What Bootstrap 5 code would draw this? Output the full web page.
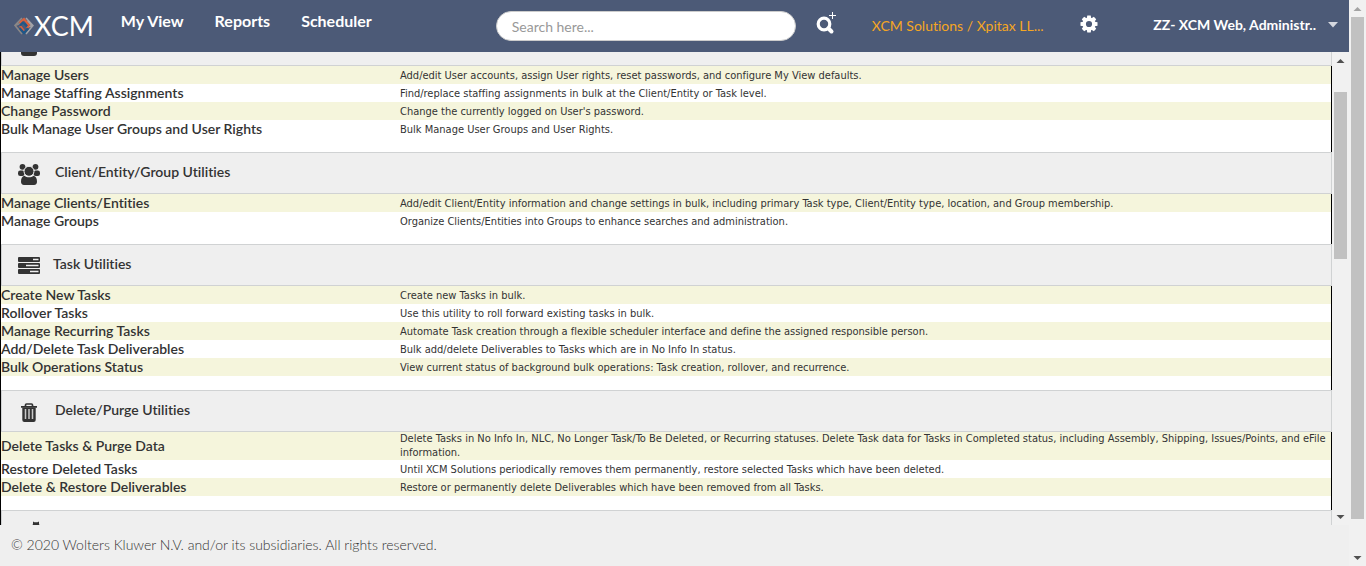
<!DOCTYPE html>
<html lang="en">
<head>
<meta charset="utf-8">
<meta name="viewport" content="width=device-width, initial-scale=1">
<title>XCM Administration</title>
<link href="https://cdn.jsdelivr.net/npm/bootstrap@5.3.0/dist/css/bootstrap.min.css" rel="stylesheet">
<style>
body { font-family: Lato, sans-serif; font-size: 14px; line-height: 18px; color: #333; background: #efefef; font-variant-ligatures: none; }
a { color: inherit; text-decoration: none; }
.app-column { min-width: 0; }
.topbar { height: 52px; background: #4c5a77; color: #fff; padding: 0 11px 0 14px; }
.brand-name { font-size: 27px; line-height: 28px; }
.main-menu { font-size: 16px; font-weight: 700; gap: 31px; margin-left: 27px; padding-bottom: 10px; }
.main-menu a { white-space: nowrap; }
.search-form { margin-left: 124px; gap: 19px; }
.search-box { width: 300px; height: 30px; border: 1px solid #ccc; border-radius: 15px; padding: 0 15px; font-size: 14px; color: #555; background: #fff; }
.search-box::placeholder { color: #999; opacity: 1; }
.icon-btn { border: 0; background: none; padding: 0; color: #fff; display: flex; }
.search-form .icon-btn { padding-bottom: 6px; }
.firm-link { color: #f5a623; font-size: 14px; margin-left: 35px; white-space: nowrap; }
.gear-btn { margin-left: 36px; padding-bottom: 4px; }
.user-btn { font-size: 14px; font-weight: 700; gap: 12px; padding-bottom: 2px; white-space: nowrap; }
.utilities { border-left: 1px solid #000; background: #fff; }
.first-section { margin-top: -28px; }
.section-head { height: 42px; background: #efefef; border: 1px solid #d0d2d3; font-size: 14px; line-height: 18px; font-weight: 600; margin: 0; padding: 0 16px 2px 15px; gap: 14px; color: #333; }
.section-head svg { width: 24px; height: 24px; margin-top: 4px; }
.task-head { gap: 12px; }
.util-table { width: 100%; table-layout: fixed; margin: 0; }
.util-table th { width: 30%; padding: 0; font-size: 14px; font-weight: 600; height: 18px; line-height: 18px; }
.util-table td { padding: 1px 0 0; font-family: "DejaVu Sans Condensed", "DejaVu Sans", sans-serif; font-size: 11px; line-height: 14px; }
.util-table .two-line { padding: 0; }
.util-table tr:nth-child(odd) { background: #f5f5dc; }
.util-wrap { padding-bottom: 14px; border-right: 1px solid #000; }
.scroll-track { width: 17px; background: #f1f1f1; }
.scroll-track svg { width: 17px; height: 17px; flex: none; }
.scroll-thumb { width: 13px; background: #c1c1c1; }
.page-foot { height: 41px; font-weight: 300; font-size: 14px; padding: 0 11px 2px; }
</style>
</head>
<body>
<svg width="0" height="0" class="position-absolute" aria-hidden="true">
  <symbol id="arrow-up" viewBox="0 0 17 17"><path d="M4.500 11h8L8.500 7z" fill="currentColor"/></symbol>
  <symbol id="arrow-down" viewBox="0 0 17 17"><path d="M4.500 7h8L8.500 11z" fill="currentColor"/></symbol>
</svg>
<div class="d-flex vh-100 overflow-hidden">
  <div class="app-column d-flex flex-column flex-grow-1">
    <header class="topbar d-flex align-items-center flex-shrink-0">
      <a href="#" class="d-flex align-items-center" aria-label="XCM">
        <svg width="20" height="20" viewBox="0 0 20 20" fill="none">
          <path d="M8 2L1 9.500 8 18M1 9.500L6 7.500M4 14l3-2" stroke="#8b8787" stroke-width="1.700"/>
          <path d="M12 2l7 7.500-7 8.500M12.500 5L18 9.500l-4 1.500" stroke="#a2a3a8" stroke-width="1.500"/>
          <path d="M5.500 7L10 3l5 6-2 3M6 10l4 5" stroke="#d9603c" stroke-width="2.200"/>
          <path d="M5.500 12l4.500 5 4-4.500M9.500 6L6 9.500M10 7l3 3.500" stroke="#1f5788" stroke-width="2.200"/>
        </svg>
        <span class="brand-name">XCM</span>
      </a>
      <nav class="main-menu d-flex">
        <a href="#">My View</a><a href="#">Reports</a><a href="#">Scheduler</a>
      </nav>
      <form class="search-form d-flex align-items-center" onsubmit="return false">
        <input type="text" class="search-box" placeholder="Search here..." aria-label="Search">
        <button class="icon-btn" type="button" aria-label="Advanced search">
          <svg width="22" height="24" viewBox="0 0 22 24" fill="none" stroke="#fff"><circle cx="9" cy="13" r="5.800" stroke-width="3.200"/><path d="M13.500 17.500l3 3" stroke-width="4" stroke-linecap="round"/><path d="M17.500 1v7M14 4.500h7" stroke-width="1"/></svg>
        </button>
      </form>
      <a href="#" class="firm-link">XCM Solutions / Xpitax LL...</a>
      <button class="icon-btn gear-btn" type="button" aria-label="Settings">
        <svg width="18" height="18" viewBox="0 0 18 18"><g fill="#fff"><path id="tooth" d="M7.300 .500h3.400l.8 4h-5zM7.300 17.500h3.400l.8-4h-5z"/><use href="#tooth" transform="rotate(45 9 9)"/><use href="#tooth" transform="rotate(90 9 9)"/><use href="#tooth" transform="rotate(135 9 9)"/></g><circle cx="9" cy="9" r="4.800" fill="none" stroke="#fff" stroke-width="3.400"/></svg>
      </button>
      <button class="icon-btn user-btn align-items-center ms-auto" type="button">ZZ- XCM Web, Administr..
        <svg width="10" height="6" viewBox="0 0 10 6"><path d="M0 0h10L5 5.500z" fill="#d5d8df"/></svg>
      </button>
    </header>
    <div class="d-flex flex-grow-1 overflow-hidden">
      <main class="utilities flex-grow-1 overflow-hidden">
        <section class="first-section">
          <h2 class="section-head d-flex align-items-center"><svg viewBox="0 0 24 24" fill="#333"><circle cx="12" cy="7" r="5"/><rect x="4" y="12" width="16" height="10" rx="3"/></svg></h2>
          <div class="util-wrap"><table class="util-table">
            <tr><th scope="row"><a href="#">Manage Users</a></th><td>Add/edit User accounts, assign User rights, reset passwords, and configure My View defaults.</td></tr>
            <tr><th scope="row"><a href="#">Manage Staffing Assignments</a></th><td>Find/replace staffing assignments in bulk at the Client/Entity or Task level.</td></tr>
            <tr><th scope="row"><a href="#">Change Password</a></th><td>Change the currently logged on User's password.</td></tr>
            <tr><th scope="row"><a href="#">Bulk Manage User Groups and User Rights</a></th><td>Bulk Manage User Groups and User Rights.</td></tr>
          </table></div>
        </section>
        <section>
          <h2 class="section-head d-flex align-items-center"><svg viewBox="0 0 24 24" fill="#333"><g transform="translate(0 1)"><circle cx="5.500" cy="3.800" r="2.900"/><circle cx="18.500" cy="3.800" r="2.900"/><rect x="1" y="7.500" width="6.500" height="5.500" rx="2.200"/><rect x="16.500" y="7.500" width="6.500" height="5.500" rx="2.200"/><circle cx="12" cy="8.300" r="5" stroke="#efefef" stroke-width="1"/><path d="M7.500 12.800c2.500 2 6.500 2 9 0 2.500.5 3.500 3 3.500 6 0 2-1 3.200-3 3.200H7c-2 0-3-1.200-3-3.200 0-3 1-5.500 3.500-6z"/></g></svg>Client/Entity/Group Utilities</h2>
          <div class="util-wrap"><table class="util-table">
            <tr><th scope="row"><a href="#">Manage Clients/Entities</a></th><td>Add/edit Client/Entity information and change settings in bulk, including primary Task type, Client/Entity type, location, and Group membership.</td></tr>
            <tr><th scope="row"><a href="#">Manage Groups</a></th><td>Organize Clients/Entities into Groups to enhance searches and administration.</td></tr>
          </table></div>
        </section>
        <section>
          <h2 class="section-head task-head d-flex align-items-center"><svg viewBox="0 0 24 24"><g fill="#333"><rect x="1" y="3" width="22" height="5" rx="1"/><rect x="1" y="9" width="22" height="5" rx="1"/><rect x="1" y="15" width="22" height="5" rx="1"/></g><path d="M16 4.800h5.500v1.500H16zM9 10.800h12.500v1.500H9zM13 16.800h8.500v1.500H13z" fill="#efefef"/></svg>Task Utilities</h2>
          <div class="util-wrap"><table class="util-table">
            <tr><th scope="row"><a href="#">Create New Tasks</a></th><td>Create new Tasks in bulk.</td></tr>
            <tr><th scope="row"><a href="#">Rollover Tasks</a></th><td>Use this utility to roll forward existing tasks in bulk.</td></tr>
            <tr><th scope="row"><a href="#">Manage Recurring Tasks</a></th><td>Automate Task creation through a flexible scheduler interface and define the assigned responsible person.</td></tr>
            <tr><th scope="row"><a href="#">Add/Delete Task Deliverables</a></th><td>Bulk add/delete Deliverables to Tasks which are in No Info In status.</td></tr>
            <tr><th scope="row"><a href="#">Bulk Operations Status</a></th><td>View current status of background bulk operations: Task creation, rollover, and recurrence.</td></tr>
          </table></div>
        </section>
        <section>
          <h2 class="section-head d-flex align-items-center"><svg viewBox="0 0 24 24"><g transform="translate(0 1)"><path d="M8.500 5.500V4q0-1 1-1h5q1 0 1 1v1.500M4 5.800h16" stroke="#333" stroke-width="1.700" fill="none"/><path d="M5.300 6.500h13.400v12.500q0 2-2 2H7.300q-2 0-2-2z" fill="#333"/><path d="M8.500 8v10M12 8v10M15.500 8v10" stroke="#c9c9c9" stroke-width="1.500"/></g></svg>Delete/Purge Utilities</h2>
          <div class="util-wrap"><table class="util-table">
            <tr><th scope="row"><a href="#">Delete Tasks &amp; Purge Data</a></th><td class="two-line">Delete Tasks in No Info In, NLC, No Longer Task/To Be Deleted, or Recurring statuses. Delete Task data for Tasks in Completed status, including Assembly, Shipping, Issues/Points, and eFile information.</td></tr>
            <tr><th scope="row"><a href="#">Restore Deleted Tasks</a></th><td>Until XCM Solutions periodically removes them permanently, restore selected Tasks which have been deleted.</td></tr>
            <tr><th scope="row"><a href="#">Delete &amp; Restore Deliverables</a></th><td>Restore or permanently delete Deliverables which have been removed from all Tasks.</td></tr>
          </table></div>
        </section>
        <section>
          <h2 class="section-head d-flex align-items-center"><svg viewBox="0 0 24 24" fill="#333"><path d="M16 1.500l1.500.8h3l1.500-.8v2l1 4-1 4h-6l-1-4 1-4zM2 9h10v12H2z"/></svg></h2>
        </section>
      </main>
      <div class="scroll-track d-flex flex-column align-items-center flex-shrink-0" aria-hidden="true">
        <svg color="#505050"><use href="#arrow-up"/></svg>
        <div class="flex-grow-1"><div style="height:5.3%"></div><div class="scroll-thumb" style="height:38%"></div></div>
        <svg color="#505050"><use href="#arrow-down"/></svg>
      </div>
    </div>
    <footer class="page-foot d-flex align-items-center flex-shrink-0">© 2020 Wolters Kluwer N.V. and/or its subsidiaries. All rights reserved.</footer>
  </div>
  <div class="scroll-track d-flex flex-column align-items-center flex-shrink-0" aria-hidden="true">
    <svg color="#a3a3a3"><use href="#arrow-up"/></svg>
    <div class="flex-grow-1"><div class="scroll-thumb" style="height:94.4%"></div></div>
    <svg color="#505050"><use href="#arrow-down"/></svg>
  </div>
</div>
<script src="https://cdn.jsdelivr.net/npm/bootstrap@5.3.0/dist/js/bootstrap.bundle.min.js"></script>
</body>
</html>
